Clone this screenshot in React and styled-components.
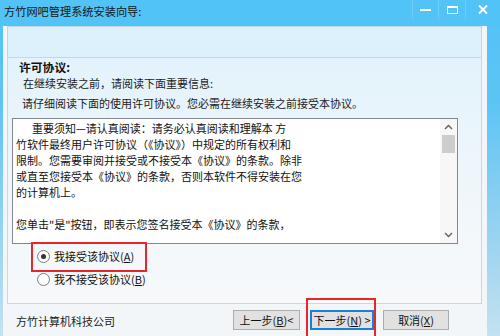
import React from "react";
import styled, { createGlobalStyle } from "styled-components";

const GlobalStyle = createGlobalStyle`
  html, body { margin: 0; padding: 0; }
  body { font-family: "Noto Sans CJK SC", "Microsoft YaHei", sans-serif; }
  * { box-sizing: border-box; }
`;

const Window = styled.div`
  width: 500px;
  height: 336px;
  overflow: hidden;
  display: flex;
  flex-direction: column;
  background: linear-gradient(to bottom, #52c3f6 0%, #5cc4f4 30%, #a8d7ef 80%, #c3e2f1 100%);
  color: #111;
`;

const TitleBar = styled.div`
  height: 26px;
  flex: none;
  display: flex;
  align-items: flex-start;
  background: #52c3f6;
`;

const Title = styled.div`
  font-size: 11.2px;
  line-height: 16px;
  margin: 3px 0 0 4px;
  color: #151515;
`;

const Controls = styled.div`
  margin-left: auto;
  display: flex;
  height: 19px;
`;

const CtrlButton = styled.div`
  width: ${(p) => p.$w}px;
  height: 19px;
  display: flex;
  align-items: center;
  justify-content: center;
  border-left: 1px solid rgba(255, 255, 255, 0.18);
  padding-top: ${(p) => p.$pt || 0}px;
`;

const Body = styled.div`
  flex: 1;
  display: flex;
  padding: 0 13px 0 3px;
  min-height: 0;
`;

const Client = styled.div`
  flex: 1;
  display: flex;
  flex-direction: column;
  background: #f3f6f8;
  padding: 0 5px 0 4px;
`;

const HeaderBand = styled.div`
  height: 32px;
  flex: none;
  background: #dcf1fc;
  border: 1px solid #bfd6e3;
  border-bottom-color: #c4d5df;
`;

const Panel = styled.div`
  height: 247px;
  flex: none;
  margin-top: -1px;
  border: 1px solid #c9d7e0;
  background: linear-gradient(to bottom, #e3f2fc 0%, #eef6fb 45%, #f7f9fa 100%);
  padding: 1px 0 0 0;
  display: flex;
  flex-direction: column;
`;

const SectionTitle = styled.div`
  font-size: 11.8px;
  font-weight: bold;
  line-height: 16px;
  padding-left: 11px;
`;

const SubLine = styled.div`
  font-size: 11px;
  line-height: 16px;
  padding-left: ${(p) => p.$pl}px;
  margin-top: ${(p) => p.$mt || 0}px;
  color: #1a1a1a;
`;

const TextBox = styled.div`
  margin: 7px 0 0 4px;
  width: 446px;
  height: 126px;
  border: 1px solid #828790;
  background: #fff;
  display: flex;
`;

const TextArea = styled.div`
  flex: 1;
  padding: 1px 0 0 3px;
  font-size: 11px;
  line-height: 16px;
  color: #111;
  overflow: hidden;
`;

const TextLine = styled.div`
  white-space: pre;
  height: 16px;
  padding-left: ${(p) => p.$indent || 0}px;
`;

const ScrollBar = styled.div`
  width: 17px;
  display: flex;
  flex-direction: column;
  align-items: center;
  background: #f7f7f7;
`;

const ScrollArrow = styled.div`
  height: 16px;
  width: 17px;
  display: flex;
  align-items: center;
  justify-content: center;
`;

const Thumb = styled.div`
  width: 13px;
  height: 18px;
  background: #cdcdcd;
`;

const Spacer = styled.div`
  flex: 1;
`;

const RadioRow = styled.label`
  position: relative;
  display: flex;
  align-items: center;
  height: 16px;
  margin: ${(p) => p.$mt}px 0 0 29px;
  font-size: 11px;
  line-height: 16px;
  color: #111;
  align-self: flex-start;
`;

const RadioCircle = styled.span`
  width: 13px;
  height: 13px;
  border-radius: 50%;
  border: 1px solid #7d7d7d;
  background: #fff;
  display: flex;
  align-items: center;
  justify-content: center;
  margin-right: 4px;
  &::after {
    content: "";
    width: 5px;
    height: 5px;
    border-radius: 50%;
    background: ${(p) => (p.$checked ? "#333" : "transparent")};
  }
`;

const Highlight = styled.div`
  position: absolute;
  left: ${(p) => p.$l}px;
  top: ${(p) => p.$t}px;
  width: ${(p) => p.$w}px;
  height: ${(p) => p.$h}px;
  border: 2px solid #e8262a;
  pointer-events: none;
`;

const Footer = styled.div`
  flex: 1;
  display: flex;
  align-items: flex-start;
  padding: 6px 0 0 9px;
`;

const Company = styled.div`
  font-size: 11px;
  line-height: 16px;
  margin-top: 3px;
  color: #1a1a1a;
`;

const Buttons = styled.div`
  margin-left: auto;
  margin-right: 33px;
  display: flex;
`;

const Button = styled.div`
  position: relative;
  width: ${(p) => p.$w}px;
  height: 20px;
  margin-left: ${(p) => p.$ml || 0}px;
  background: #e1e1e1;
  border: ${(p) => (p.$default ? "2px solid #1a7fd8" : "1px solid #adadad")};
  font-size: 11px;
  line-height: 16px;
  display: flex;
  align-items: center;
  justify-content: center;
  color: #111;
  white-space: pre;
`;

const Chevron = ({ up }) => (
  <svg width="9" height="6" viewBox="0 0 9 6">
    <path
      d={up ? "M1 5 L4.5 1.5 L8 5" : "M1 1 L4.5 4.5 L8 1"}
      fill="none"
      stroke="#606060"
      strokeWidth="1.4"
    />
  </svg>
);

const lines = [
  { t: "重要须知—请认真阅读：请务必认真阅读和理解本 方", indent: 16 },
  { t: "竹软件最终用户许可协议（《协议》）中规定的所有权利和" },
  { t: "限制。您需要审阅并接受或不接受本《协议》的条款。除非" },
  { t: "或直至您接受本《协议》的条款，否则本软件不得安装在您" },
  { t: "的计算机上。" },
  { t: "" },
  { t: "您单击\"是\"按钮，即表示您签名接受本《协议》的条款，" },
];

export default function App() {
  return (
    <>
      <GlobalStyle />
      <Window>
        <TitleBar>
          <Title>方竹网吧管理系统安装向导:</Title>
          <Controls>
            <CtrlButton $w={26} $pt={2}>
              <svg width="11" height="3" viewBox="0 0 11 3">
                <rect x="0" y="0" width="11" height="2" fill="#fff" />
              </svg>
            </CtrlButton>
            <CtrlButton $w={27}>
              <svg width="11" height="8" viewBox="0 0 11 8">
                <rect x="0.5" y="0.5" width="10" height="7" fill="none" stroke="#fff" />
                <rect x="0.5" y="0.5" width="10" height="1.5" fill="#fff" />
              </svg>
            </CtrlButton>
            <CtrlButton $w={35}>
              <svg width="10" height="9" viewBox="0 0 10 9">
                <path d="M1 0.5 L9 8.5 M9 0.5 L1 8.5" stroke="#fff" strokeWidth="2" />
              </svg>
            </CtrlButton>
          </Controls>
        </TitleBar>
        <Body>
          <Client>
            <HeaderBand />
            <Panel>
              <SectionTitle>许可协议:</SectionTitle>
              <SubLine $pl={15}>在继续安装之前，请阅读下面重要信息:</SubLine>
              <SubLine $pl={14} $mt={4}>
                请仔细阅读下面的使用许可协议。您必需在继续安装之前接受本协议。
              </SubLine>
              <TextBox>
                <TextArea>
                  {lines.map((l, i) => (
                    <TextLine key={i} $indent={l.indent}>
                      {l.t}
                    </TextLine>
                  ))}
                </TextArea>
                <ScrollBar>
                  <ScrollArrow>
                    <Chevron up />
                  </ScrollArrow>
                  <Thumb />
                  <Spacer />
                  <ScrollArrow>
                    <Chevron />
                  </ScrollArrow>
                </ScrollBar>
              </TextBox>
              <RadioRow $mt={4}>
                <RadioCircle $checked />
                <span>
                  我接受该协议(<u>A</u>)
                </span>
                <Highlight $l={-6} $t={-6} $w={116} $h={30} />
              </RadioRow>
              <RadioRow $mt={7}>
                <RadioCircle />
                <span>
                  我不接受该协议(<u>B</u>)
                </span>
              </RadioRow>
            </Panel>
            <Footer>
              <Company>方竹计算机科技公司</Company>
              <Buttons>
                <Button $w={67}>
                  上一步(<u>B</u>){"<"}
                </Button>
                <Button $w={64} $ml={10} $default>
                  下一步(<u>N</u>) {">"}
                  <Highlight $l={-6} $t={-14} $w={70} $h={50} />
                </Button>
                <Button $w={66} $ml={9}>
                  取消(<u>X</u>)
                </Button>
              </Buttons>
            </Footer>
          </Client>
        </Body>
      </Window>
    </>
  );
}
